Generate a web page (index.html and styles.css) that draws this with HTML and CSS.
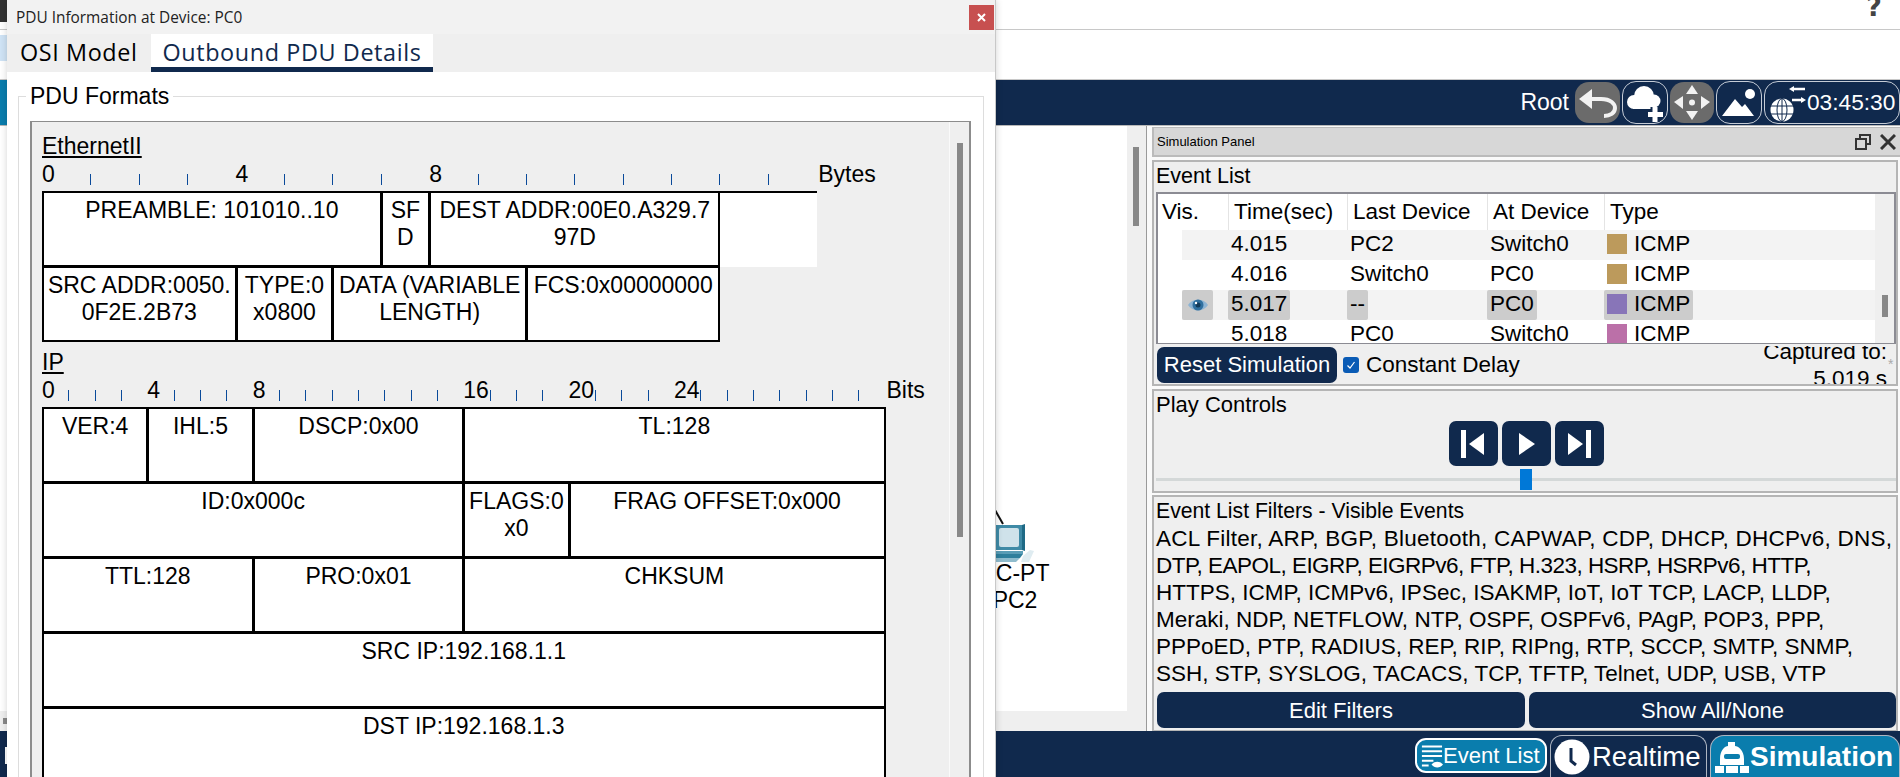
FILE: index.html
```html
<!DOCTYPE html>
<html lang="en">
<head>
    <meta charset="UTF-8">
    <title>Packet Tracer - Simulation</title>
    <link rel="stylesheet" href="styles.css">
</head>
<body>
<div class="app">
    <div class="menubar"><span class="menu-stub"></span><span class="help">?</span></div>
    <div class="toolbar"><span class="tool-stub"></span></div>

    <div class="logical-bar">
        <span class="bar-stub"></span>
        <span class="root-label">Root</span>
        <span class="bar-btn gray undo">
            <svg width="45" height="41" viewBox="0 0 45 41"><polygon points="4,17 17,7 17,27" fill="#f2f2f2"/><path d="M15 17H26C36 17 40 22 40 26C40 31 35 34 29 34" fill="none" stroke="#f2f2f2" stroke-width="4"/></svg>
        </span>
        <span class="bar-btn outline">
            <svg width="44" height="41" viewBox="0 0 44 41"><circle cx="11" cy="20" r="7" fill="#fff"/><circle cx="21" cy="14" r="10" fill="#fff"/><circle cx="31" cy="19" r="6.5" fill="#fff"/><rect x="10" y="19" width="22" height="8" fill="#fff"/><path d="M32 25V40M25 32.500H40" stroke="#10294d" stroke-width="9"/><path d="M32 25V40M25 32.500H40" stroke="#fff" stroke-width="5"/></svg>
        </span>
        <span class="bar-btn gray move">
            <svg width="44" height="41" viewBox="0 0 44 41" fill="#f2f2f2"><polygon points="22,3 28,12 16,12"/><polygon points="22,38 28,29 16,29"/><polygon points="4,20 13,14 13,27"/><polygon points="40,20 31,14 31,27"/><circle cx="22" cy="20.500" r="3"/></svg>
        </span>
        <span class="bar-btn outline">
            <svg width="44" height="41" viewBox="0 0 44 41" fill="#fff"><circle cx="33" cy="12" r="5"/><polygon points="5,34 18,17 25,25 28,22 37,34"/></svg>
        </span>
        <span class="bar-btn outline clock-btn">
            <svg width="42" height="41" viewBox="0 0 42 41"><circle cx="14" cy="28" r="11.500" fill="#fff"/><g fill="none" stroke="#10294d" stroke-width="1"><ellipse cx="14" cy="28" rx="5" ry="11.500"/><path d="M14 16V40M3 24H25M3 32H25"/></g><path d="M25 7H37M24 18H35" stroke="#fff" stroke-width="2.500"/><polygon points="21,7 26,4 26,10" fill="#fff"/><polygon points="38,18 33,15 33,21" fill="#fff"/></svg>
            <span class="clock-time">03:45:30</span>
        </span>
    </div>

    <div class="workspace">
        <div class="canvas-col">
            <div class="canvas-row">
                <div class="canvas">
                    <svg class="pc-link" width="12" height="16" viewBox="0 0 12 16"><path d="M0 0L8 14" stroke="#111" stroke-width="2"/></svg>
                    <svg class="pc-icon" width="45" height="40" viewBox="0 0 45 40">
                        <polygon points="5,1 32,1 32,26 5,26" fill="#3f8aa6"/>
                        <polygon points="32,1 35,0 35,27 32,26" fill="#1f6a86"/>
                        <rect x="9" y="4" width="20" height="19" rx="2" fill="#cfe2ea"/>
                        <rect x="0" y="27" width="33" height="3" fill="#5a9db6"/>
                        <polygon points="0,30 33,30 30,34 0,34" fill="#2f7f9c"/>
                        <polygon points="0,34 30,34 26,38 0,38" fill="#8fbccd"/>
                        <polygon points="33,32 40,26 44,27 39,38 31,38" fill="#dfecf1"/>
                    </svg>
                    <div class="pc-label">PC-PT<br>PC2</div>
                </div>
                <div class="canvas-gutter"><span class="v-thumb"></span></div>
            </div>
            <div class="h-scroll"><span class="h-thumb"></span></div>
        </div>

        <div class="sim-panel">
            <div class="sim-head">
                <span>Simulation Panel</span>
                <span class="head-icons">
                    <svg width="16" height="18" viewBox="0 0 16 18" fill="none" stroke="#333" stroke-width="2"><rect x="1" y="6" width="10" height="10"/><path d="M5 5V2H15V11H12"/></svg>
                    <svg width="16" height="16" viewBox="0 0 16 16" fill="none" stroke="#333" stroke-width="3"><path d="M1 1L15 15M15 1L1 15"/></svg>
                </span>
            </div>

            <div class="sim-box event-box">
                <div class="box-title">Event List</div>
                <div class="event-table">
                    <div class="event-cols">
                        <div class="ev-row ev-head">
                            <span class="c-vis">Vis.</span><span class="c-time">Time(sec)</span><span class="c-last">Last Device</span><span class="c-at">At Device</span><span class="c-type">Type</span>
                        </div>
                        <div class="ev-row shade">
                            <span class="c-vis"></span><span class="c-time">4.015</span><span class="c-last">PC2</span><span class="c-at">Switch0</span><span class="c-type"><i class="swatch tan"></i>ICMP</span>
                        </div>
                        <div class="ev-row">
                            <span class="c-vis"></span><span class="c-time">4.016</span><span class="c-last">Switch0</span><span class="c-at">PC0</span><span class="c-type"><i class="swatch tan"></i>ICMP</span>
                        </div>
                        <div class="ev-row shade current">
                            <span class="c-vis"><span class="eye-chip"><svg width="22" height="16" viewBox="0 0 22 16"><path d="M1 8C5 1 17 1 21 8C17 15 5 15 1 8Z" fill="#8db4d4"/><circle cx="11" cy="8" r="5.500" fill="#2f6f9f"/><circle cx="11" cy="8" r="2.500" fill="#123a5a"/><circle cx="9" cy="6" r="1.200" fill="#fff"/></svg></span></span><span class="c-time"><b>5.017</b></span><span class="c-last"><b>--</b></span><span class="c-at"><b>PC0</b></span><span class="c-type"><b><i class="swatch purple"></i>ICMP</b></span>
                        </div>
                        <div class="ev-row">
                            <span class="c-vis"></span><span class="c-time">5.018</span><span class="c-last">PC0</span><span class="c-at">Switch0</span><span class="c-type"><i class="swatch pink"></i>ICMP</span>
                        </div>
                    </div>
                    <div class="event-scroll"><span class="event-thumb"></span></div>
                </div>
                <div class="event-foot">
                    <button class="navy-btn reset-btn">Reset Simulation</button>
                    <span class="check"><svg width="16" height="16" viewBox="0 0 16 16"><rect width="16" height="16" rx="3" fill="#0a5bb5"/><path d="M4.500 8.500L7 11L11.500 5" fill="none" stroke="#fff" stroke-width="1.200"/></svg></span>
                    <span>Constant Delay</span>
                    <div class="captured"><div>Captured to:<br>5.019 s</div></div>
                    <span class="star">*</span>
                </div>
            </div>

            <div class="sim-box play-box">
                <div class="box-title">Play Controls</div>
                <div class="play-btns">
                    <span class="play-btn"><svg width="30" height="30" viewBox="0 0 30 30" fill="#fff"><rect x="3" y="1" width="5" height="28"/><polygon points="26,4 26,26 11,15"/></svg></span>
                    <span class="play-btn"><svg width="30" height="30" viewBox="0 0 30 30" fill="#fff"><polygon points="8,4 8,26 24,15"/></svg></span>
                    <span class="play-btn"><svg width="30" height="30" viewBox="0 0 30 30" fill="#fff"><polygon points="4,4 4,26 19,15"/><rect x="22" y="1" width="5" height="28"/></svg></span>
                </div>
                <div class="slider"><span class="slider-track"></span><span class="slider-handle"></span></div>
            </div>

            <div class="sim-box filter-box">
                <div class="box-title">Event List Filters - Visible Events</div>
                <div class="filter-text"><span class="wide-line">ACL Filter, ARP, BGP, Bluetooth, CAPWAP, CDP, DHCP, DHCPv6, DNS,</span><br><span class="tight-line">DTP, EAPOL, EIGRP, EIGRPv6, FTP, H.323, HSRP, HSRPv6, HTTP,</span><br>HTTPS, ICMP, ICMPv6, IPSec, ISAKMP, IoT, IoT TCP, LACP, LLDP,<br>Meraki, NDP, NETFLOW, NTP, OSPF, OSPFv6, PAgP, POP3, PPP,<br>PPPoED, PTP, RADIUS, REP, RIP, RIPng, RTP, SCCP, SMTP, SNMP,<br>SSH, STP, SYSLOG, TACACS, TCP, TFTP, Telnet, UDP, USB, VTP</div>
                <div class="filter-btns">
                    <button class="navy-btn">Edit Filters</button>
                    <button class="navy-btn">Show All/None</button>
                </div>
            </div>
        </div>
    </div>

    <div class="mode-bar">
        <span class="mode-stub"></span>
        <span class="mode-btn event-list-btn">
            <svg width="23" height="26" viewBox="0 0 24 26"><path d="M2 3H23M2 8H23M2 13H23M2 18H14M2 23H9" stroke="#fff" stroke-width="2"/><path d="M12 22C15 18 21 18 24 22C21 26 15 26 12 22Z" fill="#fff"/></svg>
            Event List
        </span>
        <span class="mode-btn realtime-btn">
            <svg width="36" height="36" viewBox="0 0 36 36"><circle cx="18" cy="18" r="17.500" fill="#fff"/><path d="M17 9V22L22 26" fill="none" stroke="#10294d" stroke-width="3"/></svg>
            Realtime
        </span>
        <span class="mode-btn sim-btn">
            <svg width="36" height="32" viewBox="0 0 36 32" fill="#fff"><path d="M6 18C6 9 11 5 14 5V1H21V5C24 5 30 9 30 18V24H6Z"/><rect x="10" y="13" width="16" height="5" rx="2" fill="#0a7dad"/><rect x="1" y="25" width="34" height="7"/><path d="M11 25V32M25 25V32" stroke="#0a7dad" stroke-width="2"/></svg>
            Simulation
        </span>
    </div>

    <!-- PDU window floats over the main app -->
    <div class="pdu-window">
        <div class="pdu-title">
            <span>PDU Information at Device: PC0</span>
            <span class="close-x"><svg width="9" height="9" viewBox="0 0 9 9"><path d="M1 1L8 8M8 1L1 8" stroke="#fff" stroke-width="2"/></svg></span>
        </div>
        <div class="pdu-tabs">
            <span class="pdu-tab">OSI Model</span>
            <span class="pdu-tab active">Outbound PDU Details</span>
        </div>
        <fieldset class="pdu-fieldset">
            <legend>PDU Formats</legend>
            <div class="format-box">
                <div class="format-content">
                    <div class="format-name">EthernetII</div>
                    <div class="ruler ruler-bytes">
                        <span>0</span><i></i><i></i><i></i><span>4</span><i></i><i></i><i></i><span>8</span><i></i><i></i><i></i><i></i><i></i><i></i><i></i>
                        <span class="unit">Bytes</span>
                    </div>
                    <div class="frame frame-bytes">
                        <div class="cell s7">PREAMBLE: 101010..10</div>
                        <div class="cell s1">SF<br>D</div>
                        <div class="cell s6">DEST ADDR:00E0.A329.7<br>97D</div>
                        <div class="cell blank s2"></div>
                        <div class="cell s4">SRC ADDR:0050.<br>0F2E.2B73</div>
                        <div class="cell s2">TYPE:0<br>x0800</div>
                        <div class="cell s4">DATA (VARIABLE<br>LENGTH)</div>
                        <div class="cell s4">FCS:0x00000000</div>
                    </div>

                    <div class="format-name">IP</div>
                    <div class="ruler ruler-bits">
                        <span>0</span><i></i><i></i><i></i><span>4</span><i></i><i></i><i></i><span>8</span><i></i><i></i><i></i><i></i><i></i><i></i><i></i><span>16</span><i></i><i></i><i></i><span>20</span><i></i><i></i><i></i><span>24</span><i></i><i></i><i></i><i></i><i></i><i></i><i></i>
                        <span class="unit">Bits</span>
                    </div>
                    <div class="frame frame-bits">
                        <div class="cell s4">VER:4</div>
                        <div class="cell s4">IHL:5</div>
                        <div class="cell s8">DSCP:0x00</div>
                        <div class="cell s16">TL:128</div>
                        <div class="cell s16">ID:0x000c</div>
                        <div class="cell s4">FLAGS:0<br>x0</div>
                        <div class="cell s12">FRAG OFFSET:0x000</div>
                        <div class="cell s8">TTL:128</div>
                        <div class="cell s8">PRO:0x01</div>
                        <div class="cell s16">CHKSUM</div>
                        <div class="cell s32">SRC IP:192.168.1.1</div>
                        <div class="cell s32">DST IP:192.168.1.3</div>
                    </div>
                </div>
                <div class="format-scroll"><span class="format-thumb"></span></div>
            </div>
        </fieldset>
    </div>
</div>
</body>
</html>
```

FILE: styles.css
```css
* {
    box-sizing: border-box;
}
html, body {
    margin: 0;
    height: 100%;
    overflow: hidden;
}
body {
    font-family: "Liberation Sans", Arial, sans-serif;
    font-size: 22.500px;
    line-height: 27px;
    color: #000;
    background: #fff;
}
.app {
    position: relative;
    width: 1900px;
    height: 777px;
    display: flex;
    flex-direction: column;
    overflow: hidden;
}

/* top of the main window */
.menubar {
    height: 30px;
    border-bottom: 1px solid #c8c8c8;
    display: flex;
    justify-content: space-between;
}
.menu-stub {
    width: 8px;
    height: 22px;
    background: #333;
}
.help {
    font-family: "DejaVu Sans", sans-serif;
    font-weight: bold;
    font-size: 27px;
    line-height: 27px;
    color: #444;
    margin: -7px 18px 0 0;
}
.toolbar {
    height: 50px;
    border-bottom: 1px solid #c8c8c8;
    padding-top: 5px;
}
.tool-stub {
    display: block;
    width: 8px;
    height: 26px;
    background: #cfe3f5;
}
.logical-bar {
    height: 45px;
    background: #10294d;
    display: flex;
    align-items: center;
    gap: 2px;
    color: #fff;
}
.bar-stub {
    width: 8px;
    height: 100%;
    margin-right: auto;
    background: #0a7dad;
}
.root-label {
    margin-right: 4px;
    font-size: 23px;
}
.bar-btn {
    height: 43px;
    width: 46px;
    border-radius: 14px;
    display: flex;
    align-items: center;
    justify-content: center;
}
.bar-btn.gray {
    background: #6b6b6b;
    width: 44px;
    height: 41px;
}
.bar-btn.undo {
    width: 45px;
}
.bar-btn.outline {
    border: 1px solid #c5ccd6;
}
.clock-btn {
    width: 136px;
    justify-content: flex-start;
    padding-left: 3px;
}
.clock-time {
    font-size: 22.700px;
    margin-left: -3px;
}

/* canvas + sim panel */
.workspace {
    flex: 1;
    min-height: 0;
    display: flex;
    border-top: 1px solid #b8b8b8;
}
.canvas-col {
    width: 1146px;
    display: flex;
    flex-direction: column;
}
.canvas-row {
    flex: 1;
    display: flex;
    min-height: 0;
}
.canvas {
    flex: 1;
    position: relative;
    background: #fff;
}
.pc-link {
    position: absolute;
    left: 995px;
    top: 384px;
}
.pc-icon {
    position: absolute;
    left: 990px;
    top: 398px;
}
.pc-label {
    position: absolute;
    left: 975px;
    top: 434px;
    width: 80px;
    text-align: center;
    font-size: 23px;
}
.canvas-gutter {
    width: 19px;
    background: #efefef;
    padding: 21px 0 0 6px;
}
.v-thumb {
    display: block;
    width: 6px;
    height: 79px;
    background: #888;
}
.h-scroll {
    height: 20px;
    background: #efefef;
    padding: 7px 0 0 3px;
}
.h-thumb {
    display: block;
    width: 5px;
    height: 6px;
    background: #888;
}

.sim-panel {
    width: 754px;
    border-left: 1px solid #9a9a9a;
    background: #fafafa;
    padding: 1px 2px 0 5px;
}
.sim-head {
    height: 30px;
    margin-right: -2px;
    background: #d7d7d7;
    border: 1px solid #bbb;
    border-width: 1px 0 2px 2px;
    display: flex;
    align-items: center;
    justify-content: space-between;
    padding: 0 4px 0 3px;
    font-size: 13px;
}
.head-icons {
    display: flex;
    align-items: center;
    gap: 9px;
}
.head-icons svg {
    display: block;
}
.sim-box {
    background: #efefef;
    border: 2px solid #b5b5b5;
    padding: 0 0 0 2px;
}
.box-title {
    height: 27px;
    font-size: 22px;
}
.event-box {
    margin-top: 3px;
    height: 226px;
}
.event-box .box-title {
    height: 30px;
    padding-top: 1px;
    font-size: 21.500px;
}
.event-table {
    height: 152px;
    width: 740px;
    border: 2px solid #8b8b93;
    border-bottom-width: 1px;
    background: #fff;
    display: flex;
    overflow: hidden;
}
.event-cols {
    width: 718px;
}
.ev-row {
    height: 30px;
    display: flex;
    margin-left: 24px;
    line-height: 28px;
    white-space: nowrap;
}
.ev-row > span {
    display: block;
    padding-left: 3px;
    flex: none;
}
.ev-row.shade {
    background: #f3f3f3;
}
.c-vis {
    width: 46px;
}
.c-time {
    width: 119px;
}
.c-last {
    width: 140px;
}
.c-at {
    width: 117px;
}
.c-type {
    width: 271px;
}
.ev-head {
    height: 36px;
    margin-left: 0;
    line-height: 36px;
}
.ev-head .c-vis {
    width: 70px;
    padding-left: 4px;
}
.ev-head span + span {
    border-left: 1px solid #e4e4e4;
    padding-left: 5px;
}
.ev-row.current b {
    display: inline-block;
    font-weight: normal;
    background: #ccc;
    height: 30px;
    padding: 0 3px;
    margin-left: -3px;
    border-radius: 2px;
}
.eye-chip {
    display: flex;
    align-items: center;
    justify-content: center;
    width: 31px;
    height: 30px;
    margin-left: -3px;
    background: #ccc;
    border-radius: 2px;
}
.swatch {
    display: inline-block;
    width: 20px;
    height: 20px;
    margin: 0 7px 0 0;
    vertical-align: -3px;
}
.swatch.tan {
    background: #bc9a5c;
}
.swatch.purple {
    background: #8875b8;
}
.swatch.pink {
    background: #bb70a8;
}
.event-scroll {
    width: 20px;
    margin-left: 0;
    background: #efefef;
    padding: 101px 0 0 7px;
}
.event-thumb {
    display: block;
    width: 6px;
    height: 22px;
    background: #888;
}
.event-foot {
    height: 40px;
    display: flex;
    align-items: center;
    padding: 1px 0 0 1px;
    white-space: nowrap;
}
.navy-btn {
    border: 0;
    background: #10294d;
    color: #fff;
    font: inherit;
    border-radius: 7px;
    height: 36px;
    padding: 0;
}
.reset-btn {
    width: 180px;
    font-size: 22px;
}
.check {
    margin: 0 7px 0 6px;
    height: 16px;
}
.check svg {
    display: block;
}
.captured {
    margin-left: auto;
    height: 38px;
    display: flex;
    align-items: center;
    text-align: right;
    overflow: hidden;
}
.star {
    width: 8px;
    margin-left: 1px;
    font-size: 14px;
    color: #aaa;
}
.play-box {
    margin-top: 3px;
    height: 104px;
    position: relative;
}
.play-box .box-title {
    height: 30px;
}
.play-btns {
    display: flex;
    justify-content: center;
    gap: 4px;
}
.play-btn {
    width: 49px;
    height: 45px;
    border-radius: 7px;
    background: #10294d;
    display: flex;
    align-items: center;
    justify-content: center;
}
.slider {
    position: relative;
    height: 21px;
    margin-top: 3px;
}
.slider-track {
    position: absolute;
    left: 0;
    right: 0;
    top: 9px;
    height: 3px;
    background: #d4d8d8;
}
.slider-handle {
    position: absolute;
    left: 364px;
    top: 0;
    width: 12px;
    height: 21px;
    background: #0078d7;
}
.filter-box {
    margin-top: 2px;
    height: 237px;
}
.filter-box .box-title {
    font-size: 21.200px;
}
.filter-text {
    white-space: nowrap;
    padding-top: 1px;
}
.wide-line {
    letter-spacing: 0.250px;
}
.tight-line {
    letter-spacing: -0.520px;
}
.filter-btns {
    display: flex;
    gap: 4px;
    margin: 5px 0 0 1px;
}
.filter-btns .navy-btn {
    flex: none;
    width: 368px;
    font-size: 22px;
}
.filter-btns .navy-btn + .navy-btn {
    width: 367px;
}

.mode-bar {
    height: 46px;
    background: #10294d;
    display: flex;
    align-items: flex-end;
    gap: 3px;
    color: #fff;
}
.mode-stub {
    width: 8px;
    height: 17px;
    margin: 0 auto 13px 0;
    border-right: 3px solid #fff;
}
.mode-btn {
    display: flex;
    align-items: center;
    white-space: nowrap;
}
.event-list-btn {
    width: 132px;
    height: 35px;
    margin-bottom: 4px;
    border: 2px solid #fff;
    border-radius: 11px;
    background: #0a7dad;
    gap: 0;
    padding-left: 3px;
    font-size: 22px;
}
.realtime-btn {
    width: 157px;
    height: 42px;
    border: 1px solid #aeb6c2;
    border-bottom: 0;
    border-radius: 12px 12px 0 0;
    font-size: 27.500px;
    gap: 2px;
    padding-left: 3px;
}
.sim-btn {
    width: 190px;
    height: 42px;
    background: #0a7dad;
    border: 1px solid #aeb6c2;
    border-bottom: 0;
    border-radius: 14px 14px 0 0;
    font-size: 28px;
    font-weight: bold;
    gap: 0;
    padding-left: 3px;
}

/* PDU window */
.pdu-window {
    position: absolute;
    left: 7px;
    top: 0;
    width: 989px;
    height: 777px;
    background: #fff;
    border-right: 1px solid #c8c8c8;
    box-shadow: 0 0 7px rgba(0, 0, 0, 0.18);
    overflow: hidden;
}
.pdu-title {
    height: 34px;
    background: #f2f2f2;
    display: flex;
    align-items: center;
    justify-content: space-between;
    padding: 0 1px 0 9px;
    font-family: "Open Sans", sans-serif;
    font-size: 15.400px;
    color: #222;
}
.close-x {
    width: 25px;
    height: 25px;
    background: #c75050;
    display: flex;
    align-items: center;
    justify-content: center;
}
.pdu-tabs {
    height: 38px;
    background: #efefef;
    display: flex;
    padding-left: 13px;
    font-family: "Open Sans", sans-serif;
    font-size: 23.400px;
    letter-spacing: 0.6px;
    line-height: 37px;
}
.pdu-tab {
    display: block;
    margin-right: 13px;
}
.pdu-tab.active {
    width: 282px;
    padding-left: 12px;
    color: #10294d;
    background: #fff;
    border-bottom: 5px solid #10294d;
}
.pdu-fieldset {
    margin: 11px 11px 0 11px;
    padding: 0 12px 0 11px;
    min-width: 0;
    height: 800px;
    border: 1px solid #ddd;
}
.pdu-fieldset legend {
    padding: 0 4px;
    margin-left: -4px;
    line-height: 27px;
    font-size: 23px;
}
.format-box {
    margin-top: 11px;
    height: 700px;
    background: #efefef;
    border: 1px solid #8c8c8c;
    border-width: 1px 2px 0 2px;
    display: flex;
}
.format-content {
    flex: 1;
    min-width: 0;
    padding: 4px 0 0 10px;
    font-size: 23px;
}
.format-name {
    height: 35px;
    padding-top: 7px;
    text-decoration: underline;
}
.ruler {
    display: grid;
    height: 30px;
    white-space: nowrap;
}
.ruler-bytes {
    grid-template-columns: repeat(16, 48.400px) auto;
}
.ruler-bits {
    grid-template-columns: repeat(32, 26.340px) auto;
}
.ruler i {
    display: block;
    width: 1px;
    height: 11px;
    margin-top: 13px;
    background: #0a4a9a;
}
.ruler .unit {
    padding-left: 2px;
}
.frame {
    display: grid;
    border: 1px solid #000;
    border-width: 1px 0 0 1px;
    grid-auto-rows: 75px;
    text-align: center;
}
.frame-bytes {
    width: 775px;
    grid-template-columns: repeat(16, 48.400px);
}
.frame-bits {
    width: 844px;
    grid-template-columns: repeat(32, 26.340px);
}
.cell {
    background: #fff;
    border: 1px solid #000;
    border-width: 1px 2px 2px 1px;
    padding-top: 4px;
    white-space: nowrap;
    overflow: hidden;
}
.cell.blank {
    border-width: 1px 0 0 0;
}
.s1 { grid-column: span 1; }
.s2 { grid-column: span 2; }
.s4 { grid-column: span 4; }
.s6 { grid-column: span 6; }
.s7 { grid-column: span 7; }
.s8 { grid-column: span 8; }
.s12 { grid-column: span 12; }
.s16 { grid-column: span 16; }
.s32 { grid-column: span 32; }
.format-scroll {
    width: 20px;
    border-left: 1px solid #fafafa;
    padding: 21px 0 0 7px;
}
.format-thumb {
    display: block;
    width: 6px;
    height: 394px;
    background: #888;
}
```
